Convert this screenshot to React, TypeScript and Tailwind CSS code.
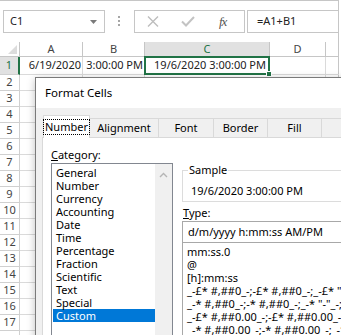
import React from 'react';

const ROWS = Array.from({ length: 16 }, (_, i) => i + 2);

const CATEGORIES = [
  'General',
  'Number',
  'Currency',
  'Accounting',
  'Date',
  'Time',
  'Percentage',
  'Fraction',
  'Scientific',
  'Text',
  'Special',
  'Custom',
];

const TYPES = [
  'mm:ss.0',
  '@',
  '[h]:mm:ss',
  '_-£* #,##0_-;-£* #,##0_-;_-£* "-"_-;_-@_-',
  '_-* #,##0_-;-* #,##0_-;_-* "-"_-;_-@_-',
  '_-£* #,##0.00_-;-£* #,##0.00_-;_-£* "-"??_-;_-@_-',
  '_-* #,##0.00_-;-* #,##0.00_-;_-* "-"??_-;_-@_-',
];

const TABS = [
  { label: 'Number', w: 'w-[60px]' },
  { label: 'Alignment', w: 'w-[69px]' },
  { label: 'Font', w: 'w-[55px]' },
  { label: 'Border', w: 'w-[54px]' },
  { label: 'Fill', w: 'w-[54px]' },
  { label: '', w: 'w-[70px]' },
];

function FormulaBar() {
  return (
    <div className="h-[41px] flex items-start pt-[9px] text-[11px] text-[#222]">
      {/* name box */}
      <div className="ml-[3px] w-[102px] h-[23px] border border-[#c6c6c6] flex items-center pl-[6px] pr-[7px]">
        <span className="flex-1">C1</span>
        <svg width="7" height="4" viewBox="0 0 7 4">
          <polygon points="0,0 7,0 3.5,4" fill="#7a7a7a" />
        </svg>
      </div>
      {/* grip dots */}
      <div className="ml-[13px] mt-[6px] flex flex-col gap-[2px]">
        <div className="w-[2px] h-[2px] bg-[#a6a6a6]" />
        <div className="w-[2px] h-[2px] bg-[#a6a6a6]" />
        <div className="w-[2px] h-[2px] bg-[#a6a6a6]" />
      </div>
      {/* cancel / enter / fx */}
      <div className="ml-[14px] w-[111px] h-[23px] border border-[#c6c6c6] flex items-center">
        <svg className="ml-[12px]" width="12" height="11" viewBox="0 0 12 11">
          <path d="M1 0.5 L11 10.5 M11 0.5 L1 10.5" stroke="#bdbdbd" strokeWidth="1.4" fill="none" />
        </svg>
        <svg className="ml-[22px]" width="14" height="11" viewBox="0 0 14 11">
          <path d="M1 5.5 L5 9.5 L13 1" stroke="#c3c3c3" strokeWidth="2" fill="none" />
        </svg>
        <span className="ml-[24px] font-['Liberation_Serif',serif] italic text-[13px] text-[#555] tracking-[-1px]">
          fx
        </span>
      </div>
      {/* formula input */}
      <div className="ml-[2px] flex-1 h-[23px] border border-r-0 border-[#c6c6c6] flex items-center pl-[9px]">
        =A1+B1
      </div>
    </div>
  );
}

function Sheet() {
  const gridCell = 'border-r border-b border-[#dadada]';
  const rowHead = 'border-r border-b border-[#d0d0d0] flex items-center justify-center text-[#444]';
  return (
    <div className="grid grid-cols-[20px_63px_62px_125px_56px_13px] text-[11px] text-[#222]">
      {/* header row */}
      <div className="h-[15px] border-r border-b border-[#c6c6c6] relative">
        <svg className="absolute left-0 top-0" width="20" height="15" viewBox="0 0 20 15">
          <polygon points="17,3 17,12 8,12" fill="#dcdcdc" />
        </svg>
      </div>
      <div className="h-[15px] border-r border-b border-[#c6c6c6] flex items-center justify-center text-[#444]">A</div>
      <div className="h-[15px] border-r border-b border-[#c6c6c6] flex items-center justify-center text-[#444]">B</div>
      <div className="h-[15px] border-r border-b border-[#c6c6c6] bg-[#e1e1e1] flex items-center justify-center text-[#217346]">
        C
      </div>
      <div className="h-[15px] border-r border-b border-[#c6c6c6] flex items-center justify-center text-[#444]">D</div>
      <div className="h-[15px] border-b border-[#c6c6c6]" />

      {/* row 1 */}
      <div className="h-[18px] bg-[#e1e1e1] border-r-2 border-r-[#217346] border-b border-b-[#d0d0d0] flex items-center justify-center text-[#217346]">
        1
      </div>
      <div className={`h-[18px] ${gridCell} flex items-center justify-end pr-[1px]`}>6/19/2020</div>
      <div className={`h-[18px] ${gridCell} flex items-center justify-end pr-[1px]`}>3:00:00 PM</div>
      <div className={`h-[18px] ${gridCell} relative flex items-center justify-end pr-[3px]`}>
        <div className="absolute -left-[1px] -top-[1px] right-[-1px] bottom-[-1px] border-2 border-[#217346]" />
        <div className="absolute right-[-3px] bottom-[-3px] w-[6px] h-[6px] bg-[#217346] border border-white" />
        <span className="relative">19/6/2020 3:00:00 PM</span>
      </div>
      <div className={`h-[18px] ${gridCell}`} />
      <div className="h-[18px] border-b border-[#dadada]" />

      {ROWS.map((r) => (
        <React.Fragment key={r}>
          <div className={`h-[16px] ${rowHead}`}>{r}</div>
          <div className={`h-[16px] ${gridCell}`} />
          <div className={`h-[16px] ${gridCell}`} />
          <div className={`h-[16px] ${gridCell}`} />
          <div className={`h-[16px] ${gridCell}`} />
          <div className="h-[16px] border-b border-[#dadada]" />
        </React.Fragment>
      ))}
      <div className="h-[16px] border-r border-[#d0d0d0]" />
      <div className="h-[16px] border-r border-[#dadada]" />
    </div>
  );
}

function FormatCells() {
  return (
    <div className="absolute left-[35px] top-[77px] w-[330px] h-[280px] border border-[#7a7a7a] bg-[#f0f0f0] shadow-[0_2px_8px_rgba(0,0,0,0.25)] text-[11px] text-black">
      <div className="h-[30px] bg-white flex items-center pl-[9px] text-[11.5px]">Format Cells</div>

      {/* tabs */}
      <div className="pt-[7px] pl-[7px] flex items-end h-[29px]">
        {TABS.map((t, i) =>
          i === 0 ? (
            <div
              key={t.label}
              className={`${t.w} h-[23px] -mb-[1px] bg-white border border-b-0 border-[#d9d9d9] flex items-center justify-center relative z-10`}
            >
              <span className="px-[1px] leading-[14px] outline outline-1 outline-dotted outline-black">{t.label}</span>
            </div>
          ) : (
            <div
              key={t.label || i}
              className={`${t.w} shrink-0 h-[19px] border border-l-0 border-b-0 border-[#d9d9d9] flex items-center justify-center`}
            >
              {t.label}
            </div>
          ),
        )}
      </div>

      {/* panel */}
      <div className="ml-[6px] h-[220px] bg-white border-l border-t border-[#d9d9d9] pt-[10px] pl-[8px] flex gap-[9px]">
        <div className="w-[122px] shrink-0">
          <div className="leading-[14px] mb-[1px]">
            <span className="underline">C</span>ategory:
          </div>
          <div className="h-[200px] border border-[#828790] flex">
            <div className="flex-1 pt-[2px] pl-[1px]">
              {CATEGORIES.map((c) => (
                <div
                  key={c}
                  className={`h-[13px] leading-[13px] pl-[3px] ${
                    c === 'Custom' ? 'bg-[#0078d7] text-white' : ''
                  }`}
                >
                  {c}
                </div>
              ))}
            </div>
            <div className="w-[17px] bg-[#f0f0f0] flex justify-center pt-[8px]">
              <svg width="9" height="6" viewBox="0 0 9 6">
                <path d="M1 5 L4.5 1.5 L8 5" stroke="#b5b5b5" strokeWidth="1.4" fill="none" />
              </svg>
            </div>
          </div>
        </div>

        <div className="w-[170px] shrink-0 pt-[15px]">
          <fieldset className="border border-[#dcdcdc] pl-[5px] pb-[3px] min-w-0">
            <legend className="px-[1px] leading-[14px]">Sample</legend>
            <div className="pl-[3px] pt-[7px] leading-[14px]">19/6/2020 3:00:00 PM</div>
          </fieldset>
          <div className="mt-[4px] leading-[14px] pl-[1px]">
            <span className="underline">T</span>ype:
          </div>
          <div className="mt-[1px] h-[22px] border border-r-0 border-[#a8a8a8] flex items-center pl-[5px] whitespace-nowrap">
            d/m/yyyy h:mm:ss AM/PM
          </div>
          <div className="h-[120px] border border-t-0 border-r-0 border-[#a8a8a8] pt-[2px] pl-[4px] overflow-hidden">
            {TYPES.map((t) => (
              <div key={t} className="h-[13px] leading-[13px] whitespace-pre">
                {t}
              </div>
            ))}
          </div>
        </div>
      </div>
    </div>
  );
}

export default function App() {
  return (
    <div className="relative w-[341px] h-[335px] overflow-hidden bg-white font-['Noto_Sans',sans-serif]">
      <div className="w-[339px] h-[335px] border-t border-r border-[#c6c6c6]">
        <FormulaBar />
        <Sheet />
      </div>
      <FormatCells />
    </div>
  );
}
